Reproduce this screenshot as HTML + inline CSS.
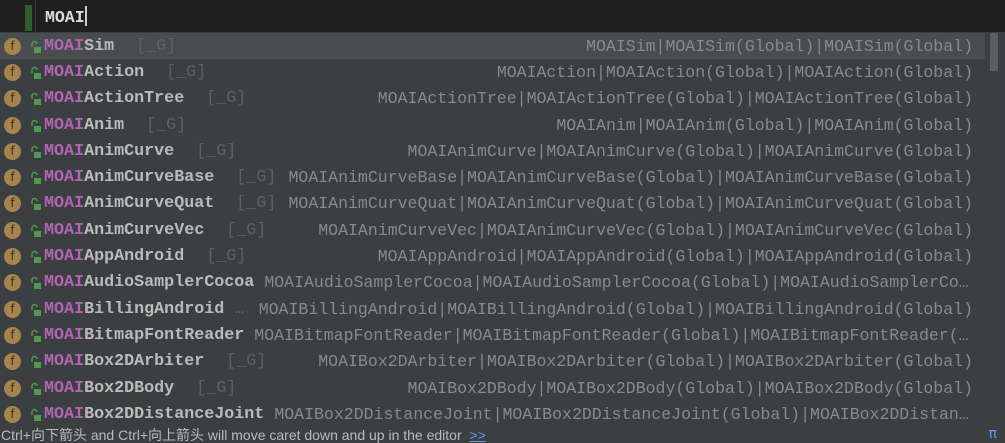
<!DOCTYPE html>
<html><head><meta charset="utf-8"><style>
*{margin:0;padding:0;box-sizing:border-box}
body{width:1005px;height:443px;overflow:hidden;background:#3c3f41;position:relative;font-family:"Liberation Mono",monospace}
.ed{position:absolute;left:0;top:0;width:1005px;height:32px;background:#1f1f1f}
.gut{position:absolute;left:35px;top:0;width:1px;height:32px;background:#3a3a3a}
.gb{position:absolute;left:25px;top:5px;width:7px;height:26px;background:#2d5e2d}
.ed .t{position:absolute;left:45px;top:6px;font-size:16.5px;color:#dcdcdc;font-weight:bold;line-height:22px}
.caret{display:inline-block;width:2px;height:20px;background:#ccc;vertical-align:-4px}
.list{position:absolute;left:0;top:33px;width:1005px}
.row{height:26.3px;display:flex;align-items:center;font-size:16.7px;white-space:nowrap;padding-right:32px}
.row.sel{background:#4a4d4f;margin-right:20px;padding-right:12px}
.ic{width:17px;height:17px;border-radius:50%;background:#a5844f;color:#3b2e18;font-family:"DejaVu Sans",sans-serif;font-size:12px;text-align:center;line-height:17px;margin-left:4px;flex:none}
.lk{width:11px;margin-left:9px;margin-right:3px;flex:none;height:13px}
.nm{font-weight:bold;color:#bbbbbb;flex:none}
.nm b{color:#b264b2}
.ty{color:#5f6264;margin-left:22px;flex:none}
.rt{flex:1;min-width:0;text-align:right;overflow:hidden;text-overflow:ellipsis;color:#888a8c;margin-left:10px;font-size:16.55px}
.sb{position:absolute;left:990px;top:33px;width:8px;height:38px;background:#5b5e60}
.st{position:absolute;left:0;top:427px;width:1005px;height:16px;font-family:"Liberation Sans","Noto Sans CJK SC",sans-serif;font-size:14px;color:#bbbbbb;line-height:16px;padding-left:1px}
.st a{color:#589df6;text-decoration:underline;margin-left:4px}
.pi{position:absolute;right:8px;top:426px;color:#589df6;font-family:"DejaVu Sans",sans-serif;font-size:14px}
</style></head><body>
<div class="ed"><div class="gb"></div><div class="gut"></div><div class="t">MOAI<span class="caret"></span></div></div>
<div class="list">
<div class="row sel"><div class="ic">f</div><svg class="lk" viewBox="0 0 11 13"><path d="M2 7V4a2.5 2.5 0 0 1 5 0" fill="none" stroke="#4f9a4f" stroke-width="1.5"/><rect x="4" y="7" width="7" height="6" fill="#4f9a4f"/></svg><span class="nm"><b>MOAI</b>Sim</span><span class="ty">[_G]</span><span class="rt">MOAISim|MOAISim(Global)|MOAISim(Global)</span></div>
<div class="row"><div class="ic">f</div><svg class="lk" viewBox="0 0 11 13"><path d="M2 7V4a2.5 2.5 0 0 1 5 0" fill="none" stroke="#4f9a4f" stroke-width="1.5"/><rect x="4" y="7" width="7" height="6" fill="#4f9a4f"/></svg><span class="nm"><b>MOAI</b>Action</span><span class="ty">[_G]</span><span class="rt">MOAIAction|MOAIAction(Global)|MOAIAction(Global)</span></div>
<div class="row"><div class="ic">f</div><svg class="lk" viewBox="0 0 11 13"><path d="M2 7V4a2.5 2.5 0 0 1 5 0" fill="none" stroke="#4f9a4f" stroke-width="1.5"/><rect x="4" y="7" width="7" height="6" fill="#4f9a4f"/></svg><span class="nm"><b>MOAI</b>ActionTree</span><span class="ty">[_G]</span><span class="rt">MOAIActionTree|MOAIActionTree(Global)|MOAIActionTree(Global)</span></div>
<div class="row"><div class="ic">f</div><svg class="lk" viewBox="0 0 11 13"><path d="M2 7V4a2.5 2.5 0 0 1 5 0" fill="none" stroke="#4f9a4f" stroke-width="1.5"/><rect x="4" y="7" width="7" height="6" fill="#4f9a4f"/></svg><span class="nm"><b>MOAI</b>Anim</span><span class="ty">[_G]</span><span class="rt">MOAIAnim|MOAIAnim(Global)|MOAIAnim(Global)</span></div>
<div class="row"><div class="ic">f</div><svg class="lk" viewBox="0 0 11 13"><path d="M2 7V4a2.5 2.5 0 0 1 5 0" fill="none" stroke="#4f9a4f" stroke-width="1.5"/><rect x="4" y="7" width="7" height="6" fill="#4f9a4f"/></svg><span class="nm"><b>MOAI</b>AnimCurve</span><span class="ty">[_G]</span><span class="rt">MOAIAnimCurve|MOAIAnimCurve(Global)|MOAIAnimCurve(Global)</span></div>
<div class="row"><div class="ic">f</div><svg class="lk" viewBox="0 0 11 13"><path d="M2 7V4a2.5 2.5 0 0 1 5 0" fill="none" stroke="#4f9a4f" stroke-width="1.5"/><rect x="4" y="7" width="7" height="6" fill="#4f9a4f"/></svg><span class="nm"><b>MOAI</b>AnimCurveBase</span><span class="ty">[_G]</span><span class="rt" style="margin-left:4px">MOAIAnimCurveBase|MOAIAnimCurveBase(Global)|MOAIAnimCurveBase(Global)</span></div>
<div class="row"><div class="ic">f</div><svg class="lk" viewBox="0 0 11 13"><path d="M2 7V4a2.5 2.5 0 0 1 5 0" fill="none" stroke="#4f9a4f" stroke-width="1.5"/><rect x="4" y="7" width="7" height="6" fill="#4f9a4f"/></svg><span class="nm"><b>MOAI</b>AnimCurveQuat</span><span class="ty">[_G]</span><span class="rt" style="margin-left:4px">MOAIAnimCurveQuat|MOAIAnimCurveQuat(Global)|MOAIAnimCurveQuat(Global)</span></div>
<div class="row"><div class="ic">f</div><svg class="lk" viewBox="0 0 11 13"><path d="M2 7V4a2.5 2.5 0 0 1 5 0" fill="none" stroke="#4f9a4f" stroke-width="1.5"/><rect x="4" y="7" width="7" height="6" fill="#4f9a4f"/></svg><span class="nm"><b>MOAI</b>AnimCurveVec</span><span class="ty">[_G]</span><span class="rt">MOAIAnimCurveVec|MOAIAnimCurveVec(Global)|MOAIAnimCurveVec(Global)</span></div>
<div class="row"><div class="ic">f</div><svg class="lk" viewBox="0 0 11 13"><path d="M2 7V4a2.5 2.5 0 0 1 5 0" fill="none" stroke="#4f9a4f" stroke-width="1.5"/><rect x="4" y="7" width="7" height="6" fill="#4f9a4f"/></svg><span class="nm"><b>MOAI</b>AppAndroid</span><span class="ty">[_G]</span><span class="rt">MOAIAppAndroid|MOAIAppAndroid(Global)|MOAIAppAndroid(Global)</span></div>
<div class="row"><div class="ic">f</div><svg class="lk" viewBox="0 0 11 13"><path d="M2 7V4a2.5 2.5 0 0 1 5 0" fill="none" stroke="#4f9a4f" stroke-width="1.5"/><rect x="4" y="7" width="7" height="6" fill="#4f9a4f"/></svg><span class="nm"><b>MOAI</b>AudioSamplerCocoa</span><span class="rt">MOAIAudioSamplerCocoa|MOAIAudioSamplerCocoa(Global)|MOAIAudioSamplerCocoa(Global)</span></div>
<div class="row"><div class="ic">f</div><svg class="lk" viewBox="0 0 11 13"><path d="M2 7V4a2.5 2.5 0 0 1 5 0" fill="none" stroke="#4f9a4f" stroke-width="1.5"/><rect x="4" y="7" width="7" height="6" fill="#4f9a4f"/></svg><span class="nm"><b>MOAI</b>BillingAndroid</span><span class="ty" style="margin-left:10px">…</span><span class="rt" style="margin-left:4px">MOAIBillingAndroid|MOAIBillingAndroid(Global)|MOAIBillingAndroid(Global)</span></div>
<div class="row"><div class="ic">f</div><svg class="lk" viewBox="0 0 11 13"><path d="M2 7V4a2.5 2.5 0 0 1 5 0" fill="none" stroke="#4f9a4f" stroke-width="1.5"/><rect x="4" y="7" width="7" height="6" fill="#4f9a4f"/></svg><span class="nm"><b>MOAI</b>BitmapFontReader</span><span class="rt">MOAIBitmapFontReader|MOAIBitmapFontReader(Global)|MOAIBitmapFontReader(Global)</span></div>
<div class="row"><div class="ic">f</div><svg class="lk" viewBox="0 0 11 13"><path d="M2 7V4a2.5 2.5 0 0 1 5 0" fill="none" stroke="#4f9a4f" stroke-width="1.5"/><rect x="4" y="7" width="7" height="6" fill="#4f9a4f"/></svg><span class="nm"><b>MOAI</b>Box2DArbiter</span><span class="ty">[_G]</span><span class="rt">MOAIBox2DArbiter|MOAIBox2DArbiter(Global)|MOAIBox2DArbiter(Global)</span></div>
<div class="row"><div class="ic">f</div><svg class="lk" viewBox="0 0 11 13"><path d="M2 7V4a2.5 2.5 0 0 1 5 0" fill="none" stroke="#4f9a4f" stroke-width="1.5"/><rect x="4" y="7" width="7" height="6" fill="#4f9a4f"/></svg><span class="nm"><b>MOAI</b>Box2DBody</span><span class="ty">[_G]</span><span class="rt">MOAIBox2DBody|MOAIBox2DBody(Global)|MOAIBox2DBody(Global)</span></div>
<div class="row"><div class="ic">f</div><svg class="lk" viewBox="0 0 11 13"><path d="M2 7V4a2.5 2.5 0 0 1 5 0" fill="none" stroke="#4f9a4f" stroke-width="1.5"/><rect x="4" y="7" width="7" height="6" fill="#4f9a4f"/></svg><span class="nm"><b>MOAI</b>Box2DDistanceJoint</span><span class="rt">MOAIBox2DDistanceJoint|MOAIBox2DDistanceJoint(Global)|MOAIBox2DDistanceJoint(Global)</span></div>
</div>
<div class="sb"></div>
<div class="st">Ctrl+向下箭头 and Ctrl+向上箭头 will move caret down and up in the editor <a>&gt;&gt;</a></div>
<div class="pi">π</div>
</body></html>
